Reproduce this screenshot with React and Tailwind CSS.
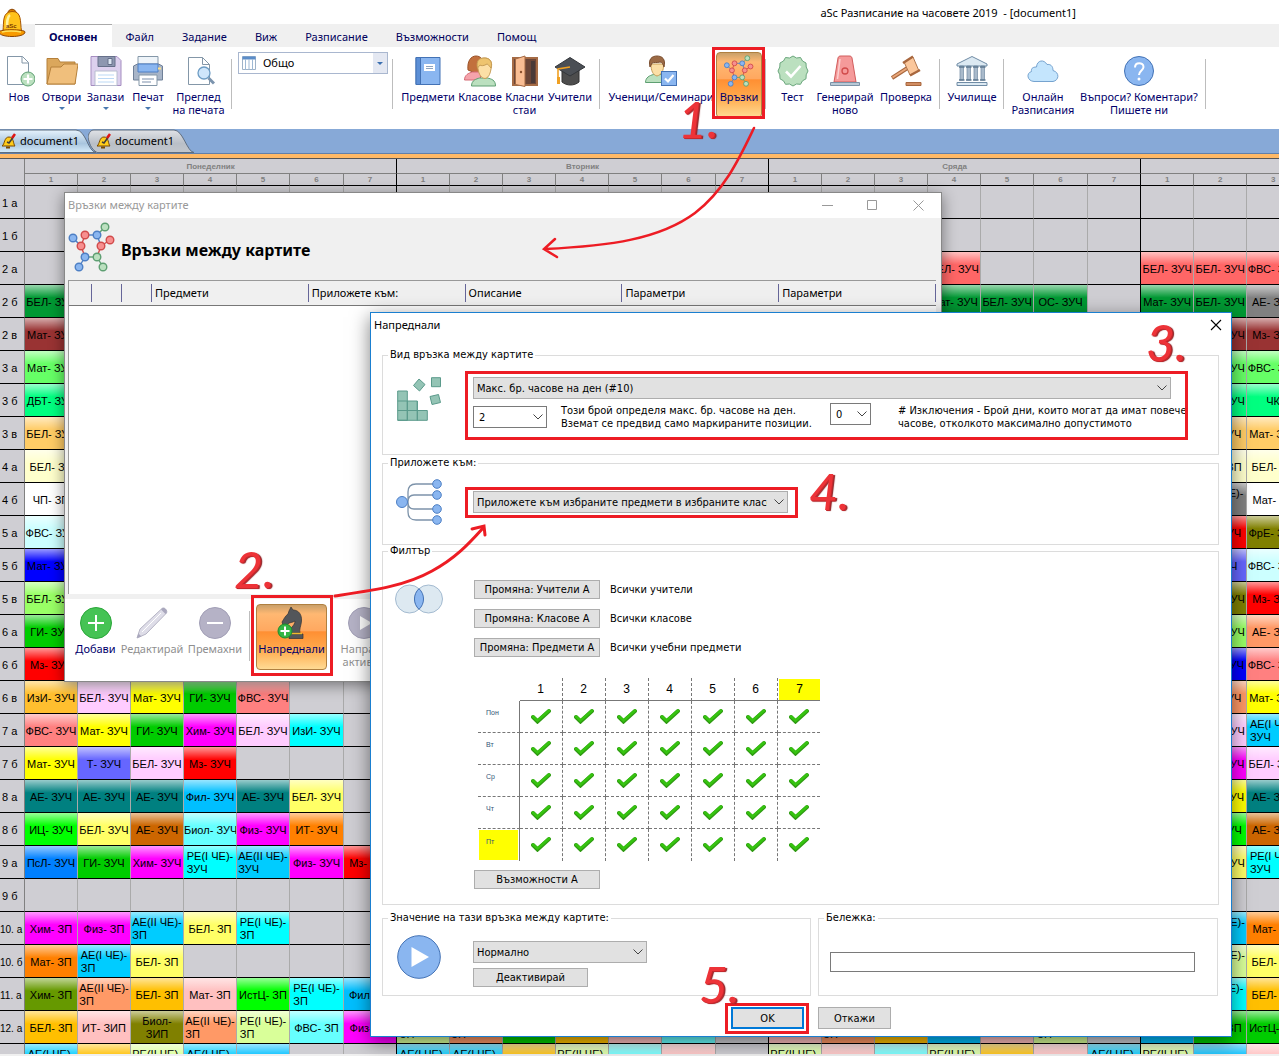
import React from "react";

const GREEN_DARK = "#009933";
const DAY_WIDTHS = [53, 53, 53, 53, 53, 54, 53];
const DAYS = ["Понеделник", "Вторник", "Сряда", "Четвъртък"];

/* Lessons are keyed by column: 0-6 Monday, 7-13 Tuesday, 14-20 Wednesday, 21-27 Thursday. */
const ROWS = [
  ["1 а", {}],
  ["1 б", {}],
  ["2 а", { 17: ["БЕЛ- ЗУЧ", "#ff6666"], 21: ["БЕЛ- ЗУЧ", "#ff6666"], 22: ["БЕЛ- ЗУЧ", "#ff6666"], 23: ["ФВС- ЗУЧ", "#ff6666"] }],
  ["2 б", { 0: ["БЕЛ- ЗУЧ", GREEN_DARK], 17: ["Мат- ЗУЧ", GREEN_DARK], 18: ["БЕЛ- ЗУЧ", GREEN_DARK], 19: ["ОС- ЗУЧ", GREEN_DARK], 21: ["Мат- ЗУЧ", GREEN_DARK], 22: ["БЕЛ- ЗУЧ", GREEN_DARK], 23: ["АЕ- ЗУЧ", "#808080"] }],
  ["2 в", { 0: ["Мат- ЗУЧ", "#993333"], 22: ["БЕЛ- ЗУЧ", "#993333"], 23: ["Мз- ЗУЧ", "#993333"] }],
  ["3 а", { 0: ["Мат- ЗУЧ", "#66ff66"], 22: ["БЕЛ- ЗУЧ", "#66ff66"], 23: ["ФВС- ЗУЧ", "#66ff66"] }],
  ["3 б", { 0: ["ДБТ- ЗУЧ", "#00ff80"], 22: ["БЕЛ- ЗУЧ", "#00ff80"], 23: ["ЧК", "#00ff80"] }],
  ["3 в", { 0: ["БЕЛ- ЗУЧ", "#ffcc66"], 22: ["АЕ- ЗУЧ", "#ffcc66"], 23: ["Мат- ЗУЧ", "#ffcc66"] }],
  ["4 а", { 0: ["БЕЛ- ЗП", "#ffffcc"], 22: ["БЕЛ- ЗП", "#ffffcc"], 23: ["БЕЛ- ЗП", "#ffffcc"] }],
  ["4 б", { 0: ["ЧП- ЗП", "#ffffff"], 22: ["АЕ(I ЧЕ)-\nЗП", "#808080"], 23: ["Мат- ЗП", "#ffffff"] }],
  ["5 а", { 0: ["ФВС- ЗУЧ", "#ccffff"], 22: ["Мз- ЗУЧ", "#ff0000"], 23: ["ФрЕ- ЗУЧ", "#808000"] }],
  ["5 б", { 0: ["Мат- ЗУЧ", "#0000ff"], 22: ["Т- ЗУЧ", "#6666ff"], 23: ["ФВС- ЗУЧ", "#ccffff"] }],
  ["5 в", { 0: ["БЕЛ- ЗУЧ", "#99ff66"], 22: ["ФрЕ- ЗУЧ", "#808000"], 23: ["Мз- ЗУЧ", "#ff0000"] }],
  ["6 а", { 0: ["ГИ- ЗУЧ", "#00cc00"], 22: ["БЕЛ- ЗУЧ", "#99ff66"], 23: ["АЕ- ЗУЧ", "#ff9966"] }],
  ["6 б", { 0: ["Мз- ЗУЧ", "#ff0000"], 22: ["Мат- ЗУЧ", "#0000ff"], 23: ["ФВС- ЗУЧ", "#ff8080"] }],
  ["6 в", { 0: ["ИзИ- ЗУЧ", "#ffbf2f"], 1: ["БЕЛ- ЗУЧ", "#ffccff"], 2: ["Мат- ЗУЧ", "#ffff00"], 3: ["ГИ- ЗУЧ", "#00cc00"], 4: ["ФВС- ЗУЧ", "#ff8080"], 22: ["АЕ- ЗУЧ", "#ff9966"], 23: ["Мат- ЗУЧ", "#ffff00"] }],
  ["7 а", { 0: ["ФВС- ЗУЧ", "#ff8080"], 1: ["Мат- ЗУЧ", "#ffff00"], 2: ["ГИ- ЗУЧ", "#00cc00"], 3: ["Хим- ЗУЧ", "#ff00ff"], 4: ["БЕЛ- ЗУЧ", "#ffccff"], 5: ["ИзИ- ЗУЧ", "#00ffff"], 22: ["БЕЛ- ЗУЧ", "#ffccff"], 23: ["АЕ(I ЧЕ)-\nЗУЧ", "#00ccff"] }],
  ["7 б", { 0: ["Мат- ЗУЧ", "#ffff00"], 1: ["Т- ЗУЧ", "#6666ff"], 2: ["БЕЛ- ЗУЧ", "#ffccff"], 3: ["Мз- ЗУЧ", "#ff0000"], 22: ["Хим- ЗУЧ", "#ff00ff"], 23: ["БЕЛ- ЗУЧ", "#ffccff"] }],
  ["8 а", { 0: ["АЕ- ЗУЧ", "#008080"], 1: ["АЕ- ЗУЧ", "#008080"], 2: ["АЕ- ЗУЧ", "#008080"], 3: ["Фил- ЗУЧ", "#00bfff"], 4: ["АЕ- ЗУЧ", "#008080"], 5: ["БЕЛ- ЗУЧ", "#ffff66"], 22: ["Мат- ЗУЧ", "#ffff00"], 23: ["АЕ- ЗУЧ", "#008080"] }],
  ["8 б", { 0: ["ИЦ- ЗУЧ", "#00ff00"], 1: ["БЕЛ- ЗУЧ", "#ffff66"], 2: ["АЕ- ЗУЧ", "#cc6600"], 3: ["Биол- ЗУЧ", "#66ffff"], 4: ["Физ- ЗУЧ", "#ff00ff"], 5: ["ИТ- ЗУЧ", "#ff8000"], 22: ["ИЦ- ЗУЧ", "#00ff00"], 23: ["АЕ- ЗУЧ", "#cc6600"] }],
  ["9 а", { 0: ["ПсЛ- ЗУЧ", "#0080ff"], 1: ["ГИ- ЗУЧ", "#00cc00"], 2: ["Хим- ЗУЧ", "#ff00ff"], 3: ["РЕ(I ЧЕ)-\nЗУЧ", "#00ffff"], 4: ["АЕ(II ЧЕ)-\nЗУЧ", "#00ccff"], 5: ["Физ- ЗУЧ", "#ff00ff"], 6: ["Мз- ЗУЧ", "#ff0000"], 22: ["БЕЛ- ЗУЧ", "#ffff66"], 23: ["РЕ(I ЧЕ)-\nЗУЧ", "#00ffff"] }],
  ["9 б", {}],
  ["10. а", { 0: ["Хим- ЗП", "#ff00ff"], 1: ["Физ- ЗП", "#ff00ff"], 2: ["АЕ(II ЧЕ)-\nЗП", "#00ccff"], 3: ["БЕЛ- ЗП", "#ffff66"], 4: ["РЕ(I ЧЕ)-\nЗП", "#00ffff"], 22: ["АЕ(II ЧЕ)-\nЗП", "#00ccff"], 23: ["Мат- ЗП", "#ff8000"] }],
  ["10. б", { 0: ["Мат- ЗП", "#ff8000"], 1: ["АЕ(I ЧЕ)-\nЗП", "#00ccff"], 2: ["БЕЛ- ЗП", "#ffff66"], 22: ["РЕ(II ЧЕ)-\nЗП", "#d9ff99"], 23: ["БЕЛ- ЗП", "#ffff66"] }],
  ["11. а", { 0: ["Хим- ЗП", "#669900"], 1: ["АЕ(II ЧЕ)-\nЗП", "#ff9966"], 2: ["БЕЛ- ЗП", "#ffbf00"], 3: ["Мат- ЗП", "#ffc0c0"], 4: ["ИстЦ- ЗП", "#00ff00"], 5: ["РЕ(I ЧЕ)-\nЗП", "#00ffff"], 6: ["Фил- ЗП", "#00bfff"], 22: ["РЕ(I ЧЕ)-\nЗП", "#00ffff"], 23: ["БЕЛ- ЗП", "#ffbf00"] }],
  ["12. а", { 0: ["БЕЛ- ЗП", "#ffbf00"], 1: ["ИТ- ЗИП", "#ffc0c0"], 2: ["Биол-\nЗИП", "#808000"], 3: ["АЕ(II ЧЕ)-\nЗП", "#ff9966"], 4: ["РЕ(I ЧЕ)-\nЗП", "#d9ff99"], 5: ["ФВС- ЗП", "#66ffff"], 6: ["Физ- ЗП", "#ff00ff"], 7: ["РЕ(I ЧЕ)-\nЗП", "#d9ff99"], 8: ["АЕ(II ЧЕ)-\nЗП", "#ff9966"], 9: ["", "#00cc00"], 10: ["", "#ffbf00"], 11: ["", "#ffc0c0"], 12: ["", "#66ffff"], 14: ["", "#ffc0c0"], 15: ["АЕ(II ЧЕ)-\nЗП", "#ff9966"], 16: ["", "#ffbf00"], 17: ["", "#00bfff"], 18: ["", "#ffc0c0"], 19: ["РЕ(I ЧЕ)-\nЗП", "#d9ff99"], 21: ["", "#00bfff"], 22: ["БЕЛ- ЗП", "#00cc00"], 23: ["ИстЦ- ЗП", "#00cc00"] }],
  ["", { 0: ["АЕ(I ЧЕ)-\nЗП", "#00ccff"], 1: ["", "#ffbf00"], 2: ["РЕ(II ЧЕ)-\nЗП", "#d9ff99"], 3: ["АЕ(I ЧЕ)-\nЗП", "#00ccff"], 4: ["", "#00bfff"], 7: ["АЕ(I ЧЕ)-\nЗП", "#00ccff"], 8: ["АЕ(I ЧЕ)-\nЗП", "#00ccff"], 9: ["", "#ffbf00"], 10: ["РЕ(II ЧЕ)-\nЗП", "#d9ff99"], 11: ["", "#66ffff"], 12: ["", "#ffc0c0"], 14: ["РЕ(II ЧЕ)-\nЗП", "#d9ff99"], 15: ["", "#ffc0c0"], 16: ["", "#66ffff"], 17: ["РЕ(II ЧЕ)-\nЗП", "#d9ff99"], 18: ["", "#ffbf00"], 19: ["", "#ffc0c0"], 20: ["АЕ(I ЧЕ)-\nЗП", "#00ccff"], 21: ["РЕ(II ЧЕ)-\nЗП", "#d9ff99"], 22: ["", "#00bfff"], 23: ["", "#ffc0c0"] }],
];

/* ---------- icons ---------- */

const Svg = ({ children, className = "size-8", box = "0 0 32 32" }) => (
  <svg viewBox={box} className={"shrink-0 " + className} fill="none" aria-hidden="true">{children}</svg>
);

const NODE_FILL = { b: ["#8ab6f0", "#4d7fc4"], r: ["#f78f8f", "#d14b4b"], g: ["#bbe0bf", "#5e9f72"] };
const NODES = [[37, 5, "g"], [29, 13, "b"], [17, 13, "r"], [5, 16, "b"], [42, 18, "r"], [13, 24, "r"], [33, 24, "r"], [17, 35, "b"], [29, 35, "g"], [11, 45, "b"], [35, 45, "g"]];
const EDGES = [[0, 1, "g"], [1, 2, "b"], [3, 5, "b"], [2, 5, "r"], [1, 6, "b"], [6, 4, "r"], [5, 7, "r"], [6, 8, "r"], [7, 8, "g"], [7, 9, "b"], [8, 10, "g"]];
const Molecule = ({ className }) => (
  <Svg className={className} box="0 0 48 50">
    {EDGES.map(([a, b, c], i) => (
      <line key={i} x1={NODES[a][0]} y1={NODES[a][1]} x2={NODES[b][0]} y2={NODES[b][1]} stroke={NODE_FILL[c][1]} strokeWidth="1.4" />
    ))}
    {NODES.map(([x, y, c], i) => (
      <circle key={i} cx={x} cy={y} r="3.8" fill={NODE_FILL[c][0]} stroke={NODE_FILL[c][1]} strokeWidth="1.4" />
    ))}
  </Svg>
);

const Page = () => <path d="M5.500 2.500h14l7 7v20h-21z M19.500 2.500v7h7" fill="#fff" stroke="#8497a8" />;

const NewIcon = () => (
  <Svg><path d="M4.500 1.500h15l6 6v22h-21z M19 1.500v6.500h6.500" fill="#fff" stroke="#8497a8" /><circle cx="25" cy="24" r="7" fill="#bbe0bf" stroke="#5e9f72" /><path d="M25 19.500v9M20.500 24h9" stroke="#fff" strokeWidth="2.200" /></Svg>
);
const OpenIcon = () => (
  <Svg><path d="M1 29V3.500h11l2 3.500h15v22z" fill="#dba75c" stroke="#b5803a" /><path d="M1 29l4-17h10l3-3h14l-3 20z" fill="#f0bf7c" stroke="#b5803a" /></Svg>
);
const SaveIcon = () => (
  <Svg><path d="M1 1.500h26l4 4v25H1z" fill="#dcd0ee" stroke="#a58dc0" /><path d="M8 1.500h17v10H8z" fill="#8d97b0" stroke="#66708a" /><path d="M18 3.500h4v6h-4z" fill="#dce6f2" stroke="#66708a" /><path d="M5 16h22v14.500H5z" fill="#fff" stroke="#b8bed0" /><path d="M8 20h16M8 23.500h16M8 27h16" stroke="#bcd9f5" /></Svg>
);
const PrintIcon = () => (
  <Svg><path d="M6 1.500h20v9H6z" fill="#eef4f9" stroke="#8497a8" /><path d="M1.500 11l4-2h21l4 2v14h-29z" fill="#a8b5c8" stroke="#6f8098" /><path d="M6 9h20v8H6z" fill="#8ab6f0" stroke="#4d7fc4" /><path d="M7 20h18v10.500H7z" fill="#fff" stroke="#8497a8" /><path d="M10 24h12M10 27h9" stroke="#a8b5c8" strokeWidth="1.500" /><path d="M26 13.500h3" stroke="#ffe08a" strokeWidth="2" /></Svg>
);
const PreviewIcon = () => (
  <Svg><Page /><circle cx="21" cy="18" r="6" fill="#cfe6fb" stroke="#6d9cc4" strokeWidth="1.300" /><path d="M25.500 23l5.500 5.500" stroke="#7b93ad" strokeWidth="3" /></Svg>
);
const BookIcon = () => (
  <Svg><path d="M4 2.500h24v27H4z" fill="#8ab6f0" stroke="#4372b5" /><path d="M4 2.500h4.500v27H4z" fill="#5c8fd6" stroke="#4372b5" /><path d="M12 9h11v7H12z" fill="#fff" /><path d="M14 11.500h7M14 13.500h7" stroke="#8fa5c0" /></Svg>
);
const ClassIcon = () => (
  <Svg><path d="M4 15C3 6 7 1 12 1s8 4 7 10l-5 8z" fill="#c2703d" stroke="#9b5228" /><path d="M0.500 25c0-5 4-7 8-8h8v8z" fill="#f5a3ab" stroke="#d46a75" /><path d="M7.500 31c0-6 5-7 8-8h8c4 1 8 2 8 8z" fill="#bbe0bf" stroke="#5e9f72" /><path d="M14 14c-2-8 2-11 7-11s8 4 6 11c-1 6-3 9-6 9.500-4-.5-6-4-7-9.500z" fill="#fcdfa6" stroke="#c79d56" /><path d="M13.500 13C12 6 15 3 20 3s9 3 7 10c-2-2-3-4-4-4-3 2-6 2-7 1z" fill="#eec46f" stroke="#c79d56" /></Svg>
);
const DoorIcon = () => (
  <Svg><path d="M4 3h24v27H4z" fill="#6c4638" stroke="#a56b45" strokeWidth="2" /><path d="M22 6h4v22h-4z" fill="#4a3a38" /><path d="M6.500 4L16 1v30.500l-9.500-2z" fill="#f9bd93" stroke="#a56b45" /><circle cx="12" cy="17" r="1.200" fill="#8a4f2d" /></Svg>
);
const CapIcon = () => (
  <Svg><path d="M8 14v13c5 4 12 4 17 0V14z" fill="#4d4d4d" stroke="#333" /><path d="M1 12L16 2.500 31 12 16 21z" fill="#4b4f55" stroke="#33363a" /><path d="M16 12L4 14v9" stroke="#f0a022" strokeWidth="1.600" /><path d="M3 22h3v7H3z" fill="#f0a022" /></Svg>
);
const StudentIcon = () => (
  <Svg><path d="M0.500 27.500c0-5 4-7 8-8h8c4 1 7 3 7 8z" fill="#bbe0bf" stroke="#5e9f72" /><path d="M6 9c0 7 2 11 6 12 4-1 7-5 6.500-12z" fill="#fcdfa6" stroke="#c79d56" /><path d="M5 12C3 4 7 1 12 1s9 3 7 11c-1-3-2-5-4-5-3 1-6 0-8 1z" fill="#9c6a45" stroke="#7b4f30" /><rect x="16.500" y="16.500" width="15" height="14" fill="#8ab6f0" stroke="#4372b5" /><path d="M20 23.500l3 3 5.500-6.500" stroke="#fff" strokeWidth="2.200" /></Svg>
);
const SealIcon = () => (
  <Svg><path d="M16 1l3.500 2 4-.5 2 3.500 3.500 2 .2 4L31 16l-1.800 3.800-.2 4-3.500 2-2 3.500-4-.3L16 31l-3.500-2-4 .3-2-3.500-3.500-2-.2-4L1 16l1.800-4 .2-4 3.500-2 2-3.500 4 .5z" fill="#bbe0bf" stroke="#6aa67c" /><path d="M9 16.500l5 5L23.500 11" stroke="#fff" strokeWidth="2.600" /></Svg>
);
const SirenIcon = () => (
  <Svg><path d="M5 27L9 3c.5-1.500 1-2 3-2h8c2 0 2.500.5 3 2l4 24z" fill="#f59a9a" stroke="#d15c5c" /><path d="M11 4L8.500 24" stroke="#fcd0d0" strokeWidth="1.500" /><circle cx="16" cy="16" r="3" stroke="#d14b4b" strokeWidth="1.300" /><path d="M1.500 27.500h29v3h-29z" fill="#b9c9d6" stroke="#7c93a8" /></Svg>
);
const GavelIcon = () => (
  <Svg><path d="M2 23L19 12" stroke="#a8673e" strokeWidth="4" /><path d="M2.500 22.500L19 12" stroke="#e9a77a" strokeWidth="2" /><path d="M14 7l9-5 6 14-9 4z" fill="#fbc79b" stroke="#b0764d" /><path d="M13 8l10-6.500M20 20.500L30 15" stroke="#a8673e" strokeWidth="2.400" /><path d="M16 27.500h15v3H16z" fill="#d18d62" stroke="#a8673e" /></Svg>
);
const SchoolIcon = () => (
  <Svg><path d="M1 9l15-7.500L31 9v2H1z" fill="#dce9f2" stroke="#6f8ba5" />{[4, 11, 18, 25].map((x) => <g key={x}><path d={`M${x} 11h3.500v14H${x}z`} fill="#a9bacb" stroke="#7c93a8" strokeWidth=".8" /><path d={`M${x - 1} 12h5.500M${x - 1} 25h5.500`} stroke="#5d7890" strokeWidth="1.300" /></g>)}<path d="M1 27.500h30v3H1z" fill="#dce9f2" stroke="#6f8ba5" /></Svg>
);
const CloudIcon = () => (
  <Svg><path d="M7 26.500h19c6-1 7-9 0-11 0-5-3-6.500-6-6C17 4 10 5 9.500 12 5 12 4 14 4.500 16.500-1 18 0 26 7 26.500z" fill="#c4e5fd" stroke="#76a3cf" /></Svg>
);
const HelpIcon = () => (
  <Svg><circle cx="16" cy="16" r="14.500" fill="#8ab6f0" stroke="#4372b5" /><path d="M12 12.500c0-6 8.500-5.500 8.500-.5 0 3.500-4.500 3.500-4.500 8" stroke="#fff" strokeWidth="2" /><circle cx="16" cy="24" r="1.500" fill="#fff" /></Svg>
);

const AppBell = () => (
  <Svg className="h-[30px] w-[26px]" box="0 0 26 30">
    <path d="M8 5c0-5 8-5 8 0" fill="#d97a00" stroke="#8c4300" /><path d="M3 23C4 14 2 4 12 3.500S20 14 21.500 23z" fill="#ffc21a" stroke="#a65300" /><path d="M7 20c0-6 0-11 3-13" stroke="#fff3a0" strokeWidth="2.500" /><path d="M-1 24c0-3 26-3 26 0 0 6-26 6-26 0z" fill="#f79a00" stroke="#8c4300" /><path d="M2 24c4-1.500 14-1.500 19 0" stroke="#ffe25c" strokeWidth="1.500" />
    <text x="6" y="20" fontSize="6" fontWeight="bold" fontFamily="Liberation Sans, sans-serif" fill="#7a3b00">aSc</text>
  </Svg>
);
const DocBell = () => (
  <Svg className="size-4" box="0 0 16 16"><path d="M1 13c3-2 2-9 7-9s4 7 6 9z" fill="#ffcc1a" stroke="#7a4a00" /><path d="M5 14.500h4" stroke="#7a4a00" strokeWidth="2" /><path d="M6 9l2 1 5-7" stroke="#3d3d3d" strokeWidth="1.500" /><path d="M11 5l3-4" stroke="#e01515" strokeWidth="2.500" /></Svg>
);

const Chevron = ({ className = "" }) => (
  <svg viewBox="0 0 10 6" className={"pointer-events-none absolute h-1.5 w-2.5 " + className} fill="none" aria-hidden="true"><path d="M.5.500L5 5 9.500.500" stroke="#444" /></svg>
);

/* ---------- ribbon ---------- */

function RibbonButton({ icon, lines, width, arrow, active, disabled }) {
  return (
    <button
      disabled={disabled}
      className={`flex shrink-0 flex-col items-center self-start text-[11px] leading-[13px] whitespace-nowrap ${width} ${disabled ? "text-[#8f8f8f]" : "text-[#00006b]"} ${active ? "-mt-[3px] h-[66px] rounded-sm border border-[#b08040] bg-[linear-gradient(to_bottom,#c9a06a,#ffb872_14%,#ffa860_40%,#ff8f33_42%,#ffab4d_70%,#ffdb94)] pt-0.5" : ""}`}
    >
      {icon}
      <span className="mt-[3px]">{lines.map((l) => <span key={l} className="block">{l}</span>)}</span>
      {arrow && <span className="mt-1 border-x-[3px] border-t-[3px] border-x-transparent border-t-[#4878b0]" />}
    </button>
  );
}

const Divider = ({ className = "" }) => <span className={"h-[50px] w-px shrink-0 bg-[#bdbdbd] " + className} />;

function Ribbon() {
  return (
    <div className="flex h-[82px] overflow-hidden bg-white pt-2">
      <RibbonButton icon={<NewIcon />} lines={["Нов"]} width="w-[38px]" />
      <RibbonButton icon={<OpenIcon />} lines={["Отвори"]} width="w-[47px]" arrow />
      <RibbonButton icon={<SaveIcon />} lines={["Запази"]} width="w-[41px]" arrow />
      <RibbonButton icon={<PrintIcon />} lines={["Печат"]} width="w-[44px]" arrow />
      <RibbonButton icon={<PreviewIcon />} lines={["Преглед", "на печата"]} width="w-[57px]" />
      <Divider className="mt-1 ml-1" />
      <div className="relative -mt-[3px] ml-1.5 h-[22px] w-[150px] shrink-0">
        <select aria-label="Изглед" className="block h-full w-full appearance-none border border-[#a9b7cf] bg-white pl-6 text-[11px] text-black">
          <option>Общо</option>
        </select>
        <svg viewBox="0 0 14 14" className="pointer-events-none absolute top-1 left-1 size-3.5" aria-hidden="true"><path d="M.5.500h13v13H.5z" fill="#fff" stroke="#9fb3c8" /><path d="M.5.500h13v3H.5z" fill="#5b8dc9" /><path d="M3.500 3v11M7 3v11M10.500 3v11" stroke="#9fb9d4" /></svg>
        <span className="pointer-events-none absolute top-px right-px flex h-5 w-3.5 items-center justify-center bg-[#e4e8f2]"><span className="border-x-[3px] border-t-[3px] border-x-transparent border-t-[#3a6fb0]" /></span>
      </div>
      <Divider className="mt-1 ml-1" />
      <span className="w-1.5 shrink-0" />
      <RibbonButton icon={<BookIcon />} lines={["Предмети"]} width="w-[58px]" />
      <RibbonButton icon={<ClassIcon />} lines={["Класове"]} width="w-[46px]" />
      <RibbonButton icon={<DoorIcon />} lines={["Класни", "стаи"]} width="w-[43px]" />
      <RibbonButton icon={<CapIcon />} lines={["Учители"]} width="w-[48px]" />
      <Divider className="mt-1 mr-1.5 ml-[5px]" />
      <RibbonButton icon={<StudentIcon />} lines={["Ученици/Семинари"]} width="w-[110px]" />
      <RibbonButton icon={<Molecule className="size-8" />} lines={["Връзки"]} width="w-[46px]" active />
      <Divider className="mt-1 mr-1.5 ml-[3px]" />
      <RibbonButton icon={<SealIcon />} lines={["Тест"]} width="w-[41px]" />
      <RibbonButton icon={<SirenIcon />} lines={["Генерирай", "ново"]} width="w-[64px]" />
      <RibbonButton icon={<GavelIcon />} lines={["Проверка"]} width="w-[58px]" />
      <Divider className="mt-1 mr-1 ml-1" />
      <RibbonButton icon={<SchoolIcon />} lines={["Училище"]} width="w-[56px]" />
      <Divider className="mt-1 mr-1.5 ml-[3px]" />
      <RibbonButton icon={<CloudIcon />} lines={["Онлайн", "Разписания"]} width="w-[66px]" />
      <RibbonButton icon={<HelpIcon />} lines={["Въпроси? Коментари?", "Пишете ни"]} width="w-[126px]" />
      <Divider className="mt-1 ml-[3px]" />
    </div>
  );
}

function DocTab({ active, className, shape, width }) {
  return (
    <button className={`relative flex h-6 shrink-0 items-center text-[11px] text-black ${className}`}>
      <svg viewBox={`0 0 ${width} 24`} className="absolute inset-0 h-full w-full" aria-hidden="true">
        <defs>
          <linearGradient id={active ? "tabOn" : "tabOff"} x1="0" y1="0" x2="0" y2="1">
            <stop offset="0" stopColor={active ? "#e6f2fc" : "#e0e2e6"} /><stop offset=".6" stopColor={active ? "#a9c5de" : "#b9bfc7"} /><stop offset="1" stopColor={active ? "#d6ecfb" : "#c2c7cd"} />
          </linearGradient>
        </defs>
        <path d={shape} fill={`url(#${active ? "tabOn" : "tabOff"})`} stroke="#5f6e80" />
      </svg>
      <span className="relative flex items-center gap-[3px]"><DocBell />document1</span>
    </button>
  );
}

/* ---------- timetable ---------- */

function Timetable() {
  const cols = DAYS.flatMap(() => DAY_WIDTHS);
  return (
    <div className="max-h-[896px] overflow-hidden border-t border-[#555] bg-[#cfced3] font-['Liberation_Sans',Arial,sans-serif]">
      <table className="w-[1513px] table-fixed border-separate border-spacing-0 text-[11px] leading-[13px] text-black">
        <colgroup>
          <col className="w-[25px]" />
          {cols.map((w, i) => <col key={i} style={{ width: w }} />)}
        </colgroup>
        <thead className="text-[8px] leading-[9px] font-bold text-[#808080]">
          <tr className="h-[15px]">
            <th rowSpan={2} className="border-r border-b border-r-[#808080] border-b-black p-0" />
            {DAYS.map((d) => <th key={d} colSpan={7} className="border-r border-b border-r-black border-b-[#808080] p-0">{d}</th>)}
          </tr>
          <tr className="h-3">
            {cols.map((_, i) => <th key={i} className={`border-r border-b border-b-black p-0 ${i % 7 === 6 ? "border-r-black" : "border-r-[#808080]"}`}>{(i % 7) + 1}</th>)}
          </tr>
        </thead>
        <tbody>
          {ROWS.map(([name, cells], r) => (
            <tr key={r} className="h-[33px]">
              <th className={`border-r border-b border-r-[#808080] border-b-black p-0 pt-0.5 text-left font-normal whitespace-nowrap ${name.length > 3 ? "text-[10px]" : "pl-0.5"}`}>{name}</th>
              {cols.map((_, c) => {
                const cell = cells[c];
                return (
                  <td
                    key={c}
                    className={`overflow-hidden border-r border-b border-b-black bg-clip-padding p-0 pt-0.5 text-center whitespace-nowrap ${c % 7 === 6 ? "border-r-black" : "border-r-[#aaaaaa]"} ${cell ? "bg-linear-to-b from-white/60 to-transparent to-40%" : ""}`}
                    style={cell ? { backgroundColor: cell[1] } : undefined}
                  >
                    {cell && <span className={`inline-block align-middle whitespace-pre ${cell[0].includes("(") ? "text-left" : ""}`}>{cell[0]}</span>}
                  </td>
                );
              })}
            </tr>
          ))}
        </tbody>
      </table>
    </div>
  );
}

/* ---------- relations window ---------- */

function RelationsWindow() {
  return (
    <section aria-label="Връзки между картите" className="absolute top-[192px] left-[64px] flex h-[490px] w-[878px] flex-col border border-[#888] bg-white shadow-[0_3px_14px_rgba(0,0,0,0.45)]">
      <div className="flex h-[25px] shrink-0 items-center pr-[17px] pl-[3px] text-[11px] text-[#999]">
        <span className="flex-1">Връзки между картите</span>
        <button aria-label="Минимизиране"><svg viewBox="0 0 11 11" className="mr-[34px] size-[11px]"><path d="M0 5.500h11" stroke="#999" /></svg></button>
        <button aria-label="Максимизиране"><svg viewBox="0 0 11 11" className="mr-[35px] size-[11px]" fill="none"><path d="M.5.500h9v9h-9z" stroke="#999" /></svg></button>
        <button aria-label="Затваряне"><svg viewBox="0 0 11 11" className="size-[11px]"><path d="M.5.500l10 10M10.500.500l-10 10" stroke="#999" /></svg></button>
      </div>
      <div className="flex h-[381px] shrink-0 flex-col bg-[#f0f0f0] pr-[5px] pb-[5px] pl-[3px]">
        <div className="flex h-[62px] shrink-0 items-center gap-[5px] pt-0.5">
          <Molecule className="h-[50px] w-12 -mt-1.5" />
          <h2 className="text-[16px] leading-5 font-bold text-black">Връзки между картите</h2>
        </div>
        <div className="flex-1 border-t border-l border-[#999] bg-white">
          <table className="w-full table-fixed border-b border-[#777] bg-[#f0f0f0] text-left text-[11px] text-black">
            <colgroup><col className="w-[23px]" /><col className="w-[30px]" /><col className="w-[30px]" /><col /><col /><col /><col /><col /></colgroup>
            <thead>
              <tr className="h-6">
                {["", "", "", "Предмети", "Приложете към:", "Описание", "Параметри", "Параметри"].map((h, i) => (
                  <th key={i} className="p-0 font-normal"><span className="block h-[18px] border-r border-[#669] pl-[3px] leading-[18px]">{h}</span></th>
                ))}
              </tr>
            </thead>
          </table>
        </div>
      </div>
      <div className="flex flex-1 pt-2 pl-2">
        <RibbonButton width="w-[45px]" lines={["Добави"]} icon={<Svg><circle cx="16" cy="16" r="15.500" fill="#45c354" stroke="#2ba63a" /><path d="M16 8v16M8 16h16" stroke="#fff" strokeWidth="2" /></Svg>} />
        <RibbonButton width="w-[68px]" disabled lines={["Редактирай"]} icon={<Svg><path d="M1 31l3-9L26 1.500c2-2 6 2 4.500 4.500L10 27z" fill="#dedde8" stroke="#b5b4c4" /><path d="M25 2.500l4.500 4.500 1-1c1-3-2-6-4.500-4.500zM1 31l1.500-4.500 3 3z" fill="#a9a7bd" /><path d="M6 25L25 6" stroke="#fff" /></Svg>} />
        <RibbonButton width="w-[58px]" disabled lines={["Премахни"]} icon={<Svg><circle cx="16" cy="16" r="15.500" fill="#b5b2c6" stroke="#a19eb5" /><path d="M8 16h16" stroke="#fff" strokeWidth="2" /></Svg>} />
        <Divider className="mt-1 mr-1.5 ml-[5px]" />
        <RibbonButton width="w-[71px]" active lines={["Напреднали"]} icon={<Svg><path d="M15 0l2 3c6 0 9 5 8.500 11-.4 5-2.500 8-1.500 12h-11c0-5 6-7 6-12-3 2-5 1-7 3l-2 2-3-1-1-3c2-3 3-6 6-8l1-3z" fill="#53565a" stroke="#303235" strokeWidth=".7" /><path d="M13 27h14v4.500H13z" fill="#53565a" stroke="#303235" strokeWidth=".7" /><path d="M15 26.500h11" stroke="#f2b92d" strokeWidth="1.500" /><circle cx="9" cy="24" r="7" fill="#34b545" stroke="#1c8c2c" /><path d="M9 19.500v9M4.500 24h9" stroke="#fff" strokeWidth="2" /></Svg>} />
        <span className="w-1.5 shrink-0" />
        <RibbonButton width="w-[62px]" disabled lines={["Направи", "активен"]} icon={<Svg><circle cx="16" cy="16" r="15.500" fill="#b5b2c6" stroke="#a19eb5" /><path d="M12 9v14l12-7z" fill="#fff" /></Svg>} />
      </div>
    </section>
  );
}

/* ---------- advanced dialog ---------- */

function Group({ title, className = "", children }) {
  return (
    <fieldset className={"min-w-0 border border-[#dcdcdc] " + className}>
      <legend className="ml-[5px] px-0.5 leading-3">{title}</legend>
      {children}
    </fieldset>
  );
}

function Combo({ label, value, plain, className }) {
  return (
    <span className={"relative h-[22px] shrink-0 " + className}>
      <select aria-label={label} className={`block h-full w-full appearance-none overflow-hidden pr-5 text-[11px] text-black ${plain ? "border border-[#7a7a7a] bg-white pl-[5px]" : "border border-[#adadad] bg-[#e1e1e1] pl-[3px]"}`}>
        <option>{value}</option>
      </select>
      <Chevron className="top-2 right-1" />
    </span>
  );
}

const PushButton = ({ children, className }) => (
  <button className={"border bg-[#e1e1e1] " + className}>{children}</button>
);

const IconColumn = ({ children }) => <div className="flex w-[72px] shrink-0 justify-center">{children}</div>;

const Tick = () => (
  <svg viewBox="0 0 20 16" className="mx-auto h-4 w-5" role="img" aria-label="да"><path d="M2 9l4.500 4.500L18 3" fill="none" stroke="#2f9a12" strokeWidth="4" strokeLinecap="round" /><path d="M2 8.500l4.500 4L18 2.500" fill="none" stroke="#36c410" strokeWidth="2.500" strokeLinecap="round" /></svg>
);

function Availability() {
  const dash = "border-dashed border-[#777]";
  return (
    <table className="mt-[21px] ml-1 w-[342px] table-fixed border-separate border-spacing-0 font-['Liberation_Sans',Arial,sans-serif]">
      <colgroup><col className="w-[42px]" /><col /><col /><col /><col /><col /><col /><col className="w-[42px]" /></colgroup>
      <thead>
        <tr className="h-[23px] text-[12px]">
          <th className="p-0" />
          {[1, 2, 3, 4, 5, 6, 7].map((n) => (
            <th key={n} className={`border-b border-b-[#777] p-0 font-normal ${n < 7 ? "border-r border-r-[#777] pr-px [border-right-style:dashed]" : "pl-px"}`}>
              <span className={`block h-[21px] leading-[21px] ${n === 7 ? "bg-[#ffff00]" : ""}`}>{n}</span>
            </th>
          ))}
        </tr>
      </thead>
      <tbody>
        {["Пон", "Вт", "Ср", "Чт", "Пт"].map((d, r) => (
          <tr key={d} className="h-8">
            <th className={`border-r border-r-[#777] p-0 pr-px pl-px text-left align-top text-[7px] font-normal text-[#357] ${r < 4 ? "border-b border-b-[#777] [border-bottom-style:dashed]" : "pt-px"}`}>
              <span className={`block pl-[7px] leading-6 ${r === 4 ? "h-[30px] bg-[#ffff00]" : ""}`}>{d}</span>
            </th>
            {[1, 2, 3, 4, 5, 6, 7].map((n) => (
              <td key={n} className={`p-0 pr-px pb-0.5 align-middle ${dash} ${n < 7 ? "border-r" : ""} ${r < 4 ? "border-b" : ""}`}><Tick /></td>
            ))}
          </tr>
        ))}
      </tbody>
    </table>
  );
}

function AdvancedDialog() {
  const rows = [["Промяна: Учители А", "Всички учители"], ["Промяна: Класове А", "Всички класове"], ["Промяна: Предмети А", "Всички учебни предмети"]];
  return (
    <section role="dialog" aria-label="Напреднали" className="absolute top-[312px] left-[370px] w-[862px] border border-[#1a7fd0] bg-white pb-[7px] font-['DejaVu_Sans_Condensed','Noto_Sans',sans-serif] text-[11px] leading-[13px] text-black shadow-[0_5px_18px_rgba(0,0,0,0.5)]">
      <div className="flex h-9 items-start justify-between pt-[5px] pr-[9px] pl-[3px]">
        <h2 className="font-['Noto_Sans',sans-serif]">Напреднали</h2>
        <button aria-label="Затваряне" className="mt-px"><svg viewBox="0 0 12 12" className="size-3"><path d="M1 1l10 10M11 1L1 11" stroke="#000" strokeWidth="1.100" /></svg></button>
      </div>
      <div className="pr-3 pl-[11px]">
        <Group title="Вид връзка между картите">
          <div className="flex gap-[18px] pt-4 pb-[23px]">
            <IconColumn>
              <Svg className="size-11" box="0 0 44 44">
                <g fill="#94c4b5" stroke="#5b9a8b">
                  <path d="M.7 14h9.600v29.300H.7zM.7 24h19.600v19.300M.7 33.500h29.600v9.800H.7M10.300 24v19.300M20.300 24v19.300" />
                  <path d="M34.500.7h9v9h-9zM16.500 8.500L22 2l6 5.500-5.500 6.500zM33 19.500l8.500-2 2 8-8.500 2z" />
                </g>
              </Svg>
            </IconColumn>
            <div className="flex flex-col gap-1">
              <Combo label="Вид връзка" value="Макс. бр. часове на ден (#10)" className="w-[698px]" />
              <div className="flex h-7 items-center whitespace-nowrap">
                <Combo label="Брой часове" value="2" plain className="w-[74px]" />
                <p className="ml-3.5 w-[269px]">Този брой определя макс. бр. часове на ден.<br />Вземат се предвид само маркираните позиции.</p>
                <Combo label="Изключения" value="0" plain className="w-[41px] self-start" />
                <p className="ml-[27px]"># Изключения - Брой дни, които могат да имат повече<br />часове, отколкото максимално допустимото</p>
              </div>
            </div>
          </div>
        </Group>
        <Group title="Приложете към:" className="mt-0.5">
          <div className="flex items-center gap-[18px] pt-2.5 pb-[19px]">
            <IconColumn>
              <Svg className="size-[46px]" box="0 0 46 46">
                <path d="M41 5H20c-5 0-8 3-8 8v20c0 5 3 8 8 8h21M41 16H18c-4 0-6 3-6 7 0 5 2 7 6 7h23" stroke="#7d93aa" strokeWidth="1.300" />
                <g fill="#8ab6f0" stroke="#4d7fc4"><circle cx="6" cy="23" r="5.500" /><circle cx="41" cy="5" r="4.300" /><circle cx="41" cy="16" r="4.300" /><circle cx="41" cy="30" r="4.300" /><circle cx="41" cy="41" r="4.300" /></g>
              </Svg>
            </IconColumn>
            <Combo label="Приложете към" value="Приложете към избраните предмети в избраните класове" className="w-[315px]" />
          </div>
        </Group>
        <Group title="Филтър">
          <div className="flex gap-[19px] pt-[23px] pb-[15px]">
            <IconColumn>
              <Svg className="mt-1 h-[30px] w-12" box="0 0 48 30">
                <g fill="#dde9f1" stroke="#a3bad0"><circle cx="14.500" cy="15" r="14" /><circle cx="33.500" cy="15" r="14" /></g>
                <path d="M24 4.700a14 14 0 0 1 0 20.600 14 14 0 0 1 0-20.600z" fill="#8ab6f0" stroke="#4372b5" />
              </Svg>
            </IconColumn>
            <div>
              <div className="flex flex-col gap-2.5">
                {rows.map(([b, t]) => (
                  <div key={b} className="flex h-[19px] items-center gap-2.5">
                    <PushButton className="h-[19px] w-[126px] border-[#adadad]">{b}</PushButton>
                    <span>{t}</span>
                  </div>
                ))}
              </div>
              <Availability />
              <PushButton className="mt-[9px] block h-[19px] w-[126px] border-[#adadad]">Възможности А</PushButton>
            </div>
          </div>
        </Group>
        <div className="mt-[7px] flex gap-[7px]">
          <Group title="Значение на тази връзка между картите:" className="w-[429px]">
            <div className="flex gap-[18px] pb-2">
              <IconColumn>
                <Svg className="mt-[11px] size-11" box="0 0 44 44"><circle cx="22" cy="22" r="21.300" fill="#8ab6f0" stroke="#4372b5" /><path d="M14.500 12v20L32 22z" fill="#fff" /></Svg>
              </IconColumn>
              <div className="flex flex-col gap-[5px] pt-[17px]">
                <Combo label="Значение" value="Нормално" className="w-[174px]" />
                <PushButton className="h-[19px] w-[115px] border-[#adadad]">Деактивирай</PushButton>
              </div>
            </div>
          </Group>
          <Group title="Бележка:" className="w-[400px]">
            <input aria-label="Бележка" className="mt-7 ml-[11px] h-5 w-[365px] border border-[#7a7a7a] bg-white px-1" />
          </Group>
        </div>
      </div>
      <div className="mt-[11px] flex gap-3.5 pl-[360px]">
        <PushButton className="h-[22px] w-[73px] border-2 border-[#0078d7]">OK</PushButton>
        <PushButton className="h-[22px] w-[73px] border-[#adadad]">Откажи</PushButton>
      </div>
    </section>
  );
}

/* ---------- tutorial marks ---------- */

const FRAMES = [
  "top-[47px] left-[712px] h-[72px] w-[53px]",
  "top-[595px] left-[251px] h-[81px] w-[82px]",
  "top-[371px] left-[465px] h-[69px] w-[723px]",
  "top-[487px] left-[465px] h-[31px] w-[333px]",
  "top-[1003px] left-[725px] h-[31px] w-[84px]",
];
const STEPS = [
  ["1.", "top-[94px] left-[678px]"],
  ["2.", "top-[544px] left-[234px]"],
  ["3.", "top-[317px] left-[1146px]"],
  ["4.", "top-[466px] left-[809px]"],
  ["5.", "top-[959px] left-[699px]"],
];

function Marks() {
  return (
    <div className="pointer-events-none absolute inset-0">
      {FRAMES.map((f) => <span key={f} className={"absolute border-3 border-[#ed1c24] " + f} />)}
      <svg viewBox="0 0 220 135" className="absolute top-[125px] left-[540px] h-[135px] w-[220px]" fill="none" stroke="#ed1c24" strokeWidth="2.500" strokeLinecap="round" aria-hidden="true">
        <path d="M214 3C200 32 185 65 155 88 120 114 70 121 5 124M15 114L4 124l13 8" />
      </svg>
      <svg viewBox="0 0 160 80" className="absolute top-[520px] left-[330px] h-20 w-40" fill="none" stroke="#ed1c24" strokeWidth="3" strokeLinecap="round" aria-hidden="true">
        <path d="M5 76C45 70 75 66 102 51 128 37 142 20 154 7M142 9l12-3 1 9" />
      </svg>
      {STEPS.map(([t, pos]) => (
        <span key={t} className={"absolute font-['Lato',sans-serif] text-[50px] leading-[50px] font-normal text-[#ed3338] italic [text-shadow:1px_1px_0_#c4282d,2px_1px_1px_#8a1f22] " + pos}>{t}</span>
      ))}
    </div>
  );
}

export default function App() {
  const tabs = ["Файл", "Задание", "Виж", "Разписание", "Възможности", "Помощ"];
  return (
    <main className="relative min-h-screen overflow-hidden bg-[#f0f0f0] font-['Noto_Sans','Open_Sans',sans-serif]">
      <header className="relative">
        <div className="flex h-6 items-center justify-end bg-white pt-0.5 pr-[203px] text-[11px] whitespace-pre text-black">aSc Разписание на часовете 2019  - [document1]</div>
        <span className="absolute top-2 left-0"><AppBell /></span>
        <nav className="flex h-[23px] bg-[#f0f0f0] pl-[35px] text-[11px] text-[#00005c]">
          <button className="border-t border-[#aaa] bg-white px-3.5 pt-0.5 font-bold">Основен</button>
          {tabs.map((t) => <button key={t} className="px-3.5 pt-[3px]">{t}</button>)}
        </nav>
      </header>
      <Ribbon />
      <div className="flex h-[25px] border-b border-[#5f7fab] bg-[#87a9d7]">
        <DocTab active width={96} className="z-1 w-24 pl-px" shape="M-1 1H76c10 0 12 22 20 22.500H-1z" />
        <DocTab width={108} className="-ml-2 w-[108px] pl-2" shape="M0 8C1 3 3 1 6 1H86c9 0 13 22 20 22.500H9C3 20 1 14 0 8z" />
      </div>
      <div className="h-1 bg-[#ffb966]" />
      <Timetable />
      <RelationsWindow />
      <AdvancedDialog />
      <Marks />
    </main>
  );
}
